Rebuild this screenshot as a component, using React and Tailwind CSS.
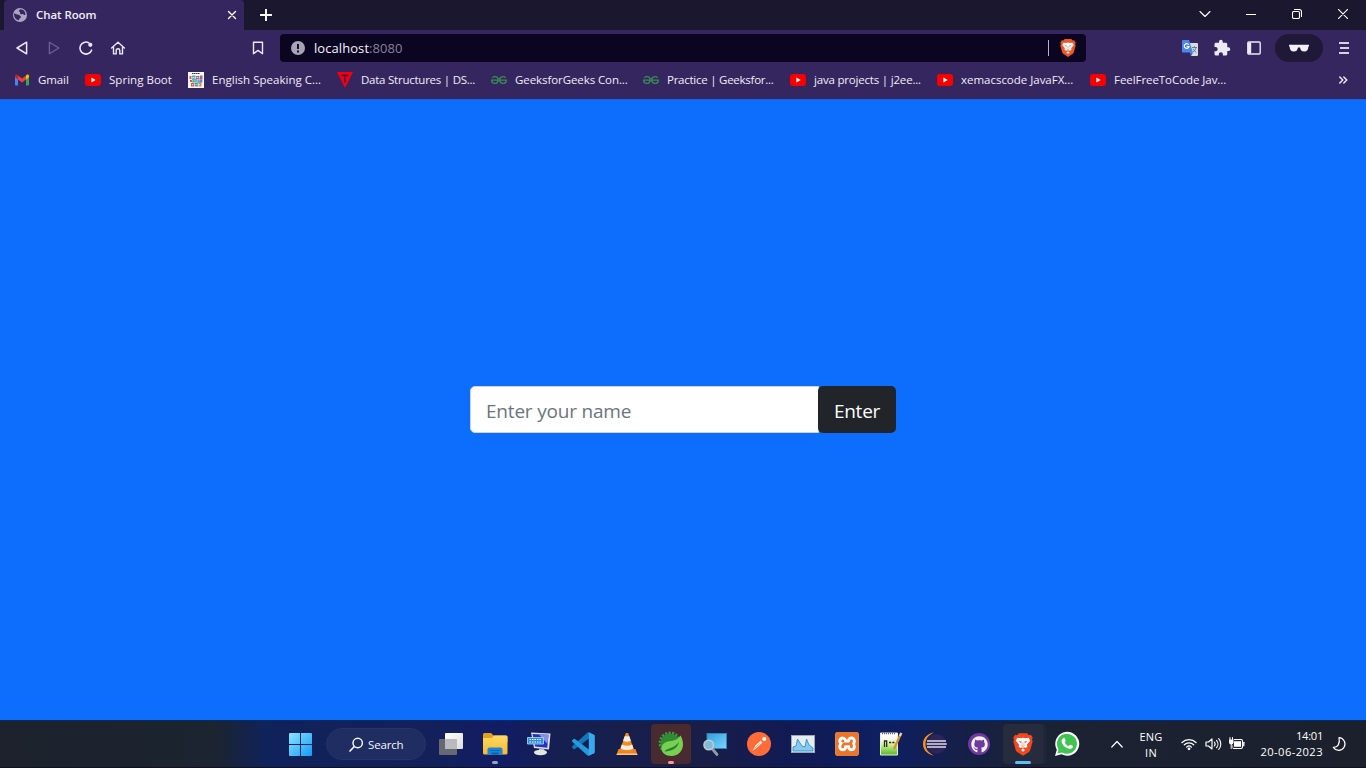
import React from "react";
import { SiGeeksforgeeks, SiXampp } from "react-icons/si";
import { FaGithub } from "react-icons/fa";
import { MdExtension } from "react-icons/md";

const line = { fill: "none", stroke: "currentColor", strokeLinecap: "round", strokeLinejoin: "round" };

function Svg({ w = 16, h = w, box = `0 0 ${w} ${h}`, children }) {
  return (
    <svg width={w} height={h} viewBox={box} className="block shrink-0">
      {children}
    </svg>
  );
}

const Globe = () => (
  <Svg w={14} box="0 0 14 14">
    <circle cx="7" cy="7" r="7" fill="#a9a5bc" />
    <path d="M1.200 5.500c1.500-.2 2.200 1 3.500 1.100 1.400.1 1.600 1 2.700 1.300.9.400.5 1.800-.3 2.200-.9.400-.6 1.500-1.300 2.200C3 12 .6 8.900 1.200 5.500z" fill="#352660" />
    <path d="M7.300 1.200c-.6.9-1.700 1-1.500 1.900.2.900 1.100.4 1.300 1.200.2.800-.4 1.400.3 1.800.9.400 1.700-.5 2.600 0 .9.600 1 1.300 2.300.9C12.800 4.200 10.700 1.200 7.300 1.200z" fill="#352660" />
  </Svg>
);

const YouTube = () => (
  <Svg>
    <rect x="0" y="2" width="16" height="12" rx="3" fill="#f80000" />
    <path d="M6.400 5.500v5L10.700 8z" fill="#fff" />
  </Svg>
);

const Gmail = () => (
  <Svg>
    <path d="M1 4.500v8q0 .9 1 .9h2V6.600z" fill="#4285f4" />
    <path d="M15 4.500v8q0 .9-1 .9h-2V6.600z" fill="#34a853" />
    <path d="M12 3.400v4l3-2.200V4c0-1.500-1.400-1.900-2.300-1.200z" fill="#fbbc04" />
    <path d="M1 5.200V4c0-1.500 1.400-1.900 2.300-1.200l.7.600v4z" fill="#c5221f" />
    <path d="M4 3.400 8 6.400l4-3v4l-4 3-4-3z" fill="#ea4335" />
  </Svg>
);

const EnglishLogo = () => (
  <Svg>
    <rect width="16" height="16" fill="#f7f7f4" />
    <path d="M4 1.500h8" stroke="#333" strokeWidth="1" strokeDasharray="1.500 .5" />
    <path d="M1.500 4h2v3h-2zM2 8h2v2H2z" fill="#e34f6b" />
    <path d="M4 3.500h3.500v3.300H4z" fill="#58a8c9" />
    <path d="M8 4h3.500v3H8z" fill="#d9536b" />
    <path d="M12 3.500h2.500v4H12z" fill="#8e6b9e" />
    <path d="M4 7.200h5v3.300H4z" fill="#3ba98a" />
    <path d="M9.300 7.500h5v3.200h-5z" fill="#4a86c9" />
    <path d="M3 11h3.500v3.500H3z" fill="#e8563a" />
    <path d="M7 11h3v3.500H7z" fill="#3b9cd4" />
    <path d="M10.500 11h3v3.500h-3z" fill="#e0883b" />
    <path d="M3.500 5.500h9M4 8.900h9M4 12.700h8" stroke="#fff" strokeWidth=".8" strokeDasharray="1 .8" />
  </Svg>
);

const TakeUForward = () => (
  <Svg>
    <path d="M0 0h16L8 16z" fill="#f3000c" />
    <path d="M4.600 3.300h6.800M8 3.300v7.200" stroke="#57134c" strokeWidth="1.700" />
  </Svg>
);

const Geeks = () => <SiGeeksforgeeks size={16} color="#388953" className="shrink-0" />;

const BOOKMARKS = [
  { icon: Gmail, text: "Gmail", box: "w-[71px]", track: "tracking-[-0.1px]" },
  { icon: YouTube, text: "Spring Boot", box: "w-[103px]", track: "tracking-[0.03px]" },
  { icon: EnglishLogo, text: "English Speaking C...", box: "w-[149px]", track: "tracking-[0.02px]" },
  { icon: TakeUForward, text: "Data Structures | DS...", box: "w-[154px]", track: "tracking-[-0.24px]" },
  { icon: Geeks, text: "GeeksforGeeks Con...", box: "w-[152px]", track: "tracking-[-0.08px]" },
  { icon: Geeks, text: "Practice | Geeksfor...", box: "w-[147px]", track: "tracking-[-0.25px]" },
  { icon: YouTube, text: "java projects | j2ee...", box: "w-[147px]", track: "tracking-[-0.19px]" },
  { icon: YouTube, text: "xemacscode JavaFX...", box: "w-[153px]", track: "tracking-[-0.02px]" },
  { icon: YouTube, text: "FeelFreeToCode Jav...", box: "w-[153px]", track: "tracking-[-0.06px]" },
];

function TabStrip() {
  return (
    <div className="flex h-[30px] shrink-0 bg-[#1a172e] pl-1 text-white">
      <div className="flex w-[240px] items-center rounded-t-[4px] bg-[#352660] pl-[9px] pr-[7px]">
        <Globe />
        <span className="ml-[9px] flex-1 whitespace-nowrap text-[11.5px] font-semibold tracking-[-0.08px] text-[#f0eef6]">Chat Room</span>
        <Svg w={10}>
          <path d="M1.500 1.500l7 7M8.500 1.500l-7 7" {...line} strokeWidth="1.400" />
        </Svg>
      </div>
      <div className="flex w-[44px] items-center justify-center">
        <Svg w={12}>
          <path d="M6 .5v11M.5 6h11" {...line} strokeWidth="1.900" />
        </Svg>
      </div>
      <div className="ml-auto flex pb-[2px]">
        <div className="flex w-[46px] items-center justify-center">
          <Svg w={12}><path d="M1 3.500l5 5 5-5" {...line} strokeWidth="1.100" /></Svg>
        </div>
        <div className="flex w-[46px] items-center justify-center">
          <Svg w={10}><path d="M0 5.500h10" {...line} strokeLinecap="butt" /></Svg>
        </div>
        <div className="flex w-[46px] items-center justify-center">
          <Svg w={10}>
            <rect x=".5" y="2.500" width="7" height="7" rx="1.300" {...line} strokeWidth="1.100" />
            <path d="M2.500.5h4.700q2.300 0 2.300 2.300v4.700" {...line} strokeWidth="1.100" />
          </Svg>
        </div>
        <div className="flex w-[46px] items-center justify-center">
          <Svg w={10}><path d="M.4.4l9.200 9.200M9.600.4L.4 9.600" {...line} strokeWidth="1.100" /></Svg>
        </div>
      </div>
    </div>
  );
}

function Toolbar() {
  return (
    <div className="flex h-[36px] shrink-0 items-center pl-[14px] text-[#ece9f5]">
      <div className="flex gap-4">
        <Svg><path d="M12.600 2.200v11.600L3 8z" {...line} strokeWidth="1.500" /></Svg>
        <span className="text-[#6d6290]"><Svg><path d="M3.400 2.200v11.600L12.900 8z" {...line} strokeWidth="1.300" /></Svg></span>
        <Svg>
          <path d="M13.600 10.200A6 6 0 1 1 10.700 2.700" {...line} strokeWidth="1.600" />
          <circle cx="12.300" cy="4.800" r="2.100" fill="currentColor" />
        </Svg>
        <Svg><path d="M1.600 8L8 2.200 14.400 8M3.500 7v6.900h2.700v-3.400a1.800 1.800 0 0 1 3.600 0v3.400h2.700V7" {...line} strokeWidth="1.400" /></Svg>
      </div>
      <div className="ml-[124px]">
        <Svg><path d="M3.500 2.200h9v11.500L8 10.400l-4.500 3.300z" {...line} strokeWidth="1.400" /></Svg>
      </div>
      <div className="ml-[14px] flex h-7 w-[806px] items-center rounded-[4px] bg-[#0c0522] pl-[11px] pr-[9px]">
        <Svg w={14}>
          <circle cx="7" cy="7" r="7" fill="#a7a5b4" />
          <path d="M7 3v5M7 9.600v1.800" stroke="#150e2c" strokeWidth="2" />
        </Svg>
        <span className="ml-[9px] pt-px text-[13px] tracking-[0.07px] text-[#f4f2fa]">
          localhost<span className="text-[#85819a]">:8080</span>
        </span>
        <span className="ml-auto mr-[10px] h-4 w-px bg-[#b5b1c6]" />
        <span className="flex h-[20px] w-[18px] items-center justify-center text-[#f1562b]">
          <Brave w={16} h={18} />
        </span>
      </div>
      <div className="ml-[96px] flex items-center">
        <Svg>
          <path d="M7 3h8q1 0 1 1v11q0 1-1 1H9z" fill="#d5dde0" />
          <path d="M1 0h6l4 12.500H1q-1 0-1-1V1q0-1 1-1z" fill="#4a86ee" />
          <path d="M8 12.500h3L9.300 16z" fill="#3367d6" />
          <path d="M6.700 4.700A2.400 2.400 0 1 0 7 6.600H4.800" fill="none" stroke="#fff" strokeWidth="1.100" />
          <path d="M10 7.500h5M12.500 6.200v1.300M14 7.500c-.5 2.500-1.800 3.800-3 4.600M11 8.800c.8 1.600 1.800 2.600 3.300 3.700" fill="none" stroke="#5f7680" strokeWidth=".9" />
        </Svg>
        <span className="ml-[15px]"><MdExtension size={18} /></span>
        <span className="ml-[16px]">
          <Svg w={14}>
            <rect x=".8" y="1" width="12.400" height="12" rx="1" {...line} strokeWidth="1.400" />
            <path d="M1 1.500h3.200v11H1z" fill="currentColor" />
          </Svg>
        </span>
        <span className="ml-[14px] flex h-7 w-12 items-center justify-center rounded-full bg-[#1f1836]">
          <Svg w={20} h={8}>
            <path d="M0 .7h20v1.500l-.7.500c0 3-1.300 4.800-4 4.800-2.900 0-3.900-1.900-4.300-4.100H9C8.600 5.600 7.600 7.500 4.700 7.500 2 7.500.7 5.700.7 2.700L0 2.200z" fill="#f1eff8" />
          </Svg>
        </span>
        <span className="ml-[16px] text-[#d6d2e4]">
          <Svg w={11} h={14}>
            <path d="M0 2h10M1 7h9M0 12h10" {...line} strokeLinecap="butt" strokeWidth="2" />
          </Svg>
        </span>
      </div>
    </div>
  );
}

function Bookmarks() {
  return (
    <div className="flex h-[33px] shrink-0 items-center pb-[5px] pl-[14px] text-[11.5px] text-[#f0eef6]">
      {BOOKMARKS.map(({ icon: Icon, text, box, track }) => (
        <div key={text} className={`flex shrink-0 items-center gap-2 whitespace-nowrap ${box} ${track}`}>
          <Icon />
          <span>{text}</span>
        </div>
      ))}
      <span className="ml-auto mr-[18px]">
        <Svg w={9} h={8}><path d="M.8 1l3 3-3 3M4.800 1l3 3-3 3" {...line} strokeWidth="1.400" /></Svg>
      </span>
    </div>
  );
}

function Brave({ w, h }) {
  return (
    <Svg w={w} h={h} box="0 0 22 25">
      <path d="M6.500 0h9l2 2.200 2-.3 2.200 3-.8 2 .7 2.200-2.500 9.200q-.5 1.700-2 2.700L11 25l-6.100-4q-1.500-1-2-2.700L.4 9.100l.7-2.200-.8-2 2.200-3 2 .3z" fill="currentColor" />
      <path d="M4.800 5.200l3.600.5L11 5l2.600.7 3.600-.5 1.700 3.200-3.600 4.300.6 2.300-2.100 1.400-1.700-1-.8.600v1.200l2 1.400-2.300 1.900-2.300-1.900 2-1.400V16l-.8-.6-1.700 1-2.100-1.400.6-2.300-3.600-4.300z" fill="#fff" />
      <path d="M5.900 8.500l3.400.9-.8 1.500zM16.100 8.500l-3.400.9.800 1.500zM9.600 13.900h2.800L11 15z" fill="currentColor" />
      <path d="M9.200 9.400l.9 2.300-.6 2.200M12.800 9.400l-.9 2.300.6 2.200" fill="none" stroke="currentColor" strokeWidth=".5" />
    </Svg>
  );
}

const Windows = () => (
  <Svg w={23} box="0 0 24 24">
    <defs>
      <linearGradient id="win" x2="1" y2="1"><stop stopColor="#8be4ff" /><stop offset="1" stopColor="#139bf5" /></linearGradient>
    </defs>
    <path d="M1 0h10.500v11.500H0V1q0-1 1-1zM12.500 0H23q1 0 1 1v10.500H12.500zM0 12.500h11.500V24H1q-1 0-1-1zM12.500 12.500H24V23q0 1-1 1H12.500z" fill="url(#win)" />
  </Svg>
);

const TaskView = () => (
  <Svg w={24}>
    <defs><linearGradient id="tv" x2="1" y2="1"><stop stopColor="#fff" /><stop offset="1" stopColor="#dcdde0" /></linearGradient></defs>
    <rect x="0" y="7" width="18" height="16" rx="1" fill="#666a70" />
    <rect x="6" y="1" width="18" height="16" rx="1" fill="url(#tv)" />
    <rect x="6" y="7" width="12" height="10" fill="#b9babd" />
  </Svg>
);

const Explorer = () => (
  <Svg w={26} h={24}>
    <defs><linearGradient id="fold" x2="0" y2="1"><stop stopColor="#ffd965" /><stop offset="1" stopColor="#f6b92d" /></linearGradient></defs>
    <path d="M1 2.500Q1 1 2.500 1H9l2.500 2.500H24q1.500 0 1.500 1.500v5H1z" fill="#e5a11b" />
    <path d="M1 6h8.500L12 3.500h12q1.500 0 1.500 1.500v16q0 1.500-1.500 1.500H2.500Q1 22.500 1 21z" fill="url(#fold)" />
    <path d="M5.500 22.500v-5q0-2 2-2h11q2 0 2 2v5z" fill="#1687d9" />
    <path d="M9.500 22.500v-2h7v2z" fill="#0c60a9" />
    <path d="M8 18.500h10" stroke="#0e69b4" />
  </Svg>
);

const VirtualPc = () => (
  <Svg w={26} h={26}>
    <path d="M5 1.500l19.500 1-1.500 16L8 17z" fill="#dfe2e5" />
    <path d="M6.500 3l16 .8-1.200 13L9 15.500z" fill="#2630c4" />
    <path d="M13 3.500l9.500.4-1 9z" fill="#8290e8" />
    <path d="M1.500 6.500h16v6.500h-16z" fill="#2b8de0" stroke="#b7dcf5" strokeWidth=".8" />
    <path d="M3.500 8.500h12M3.500 11h12" stroke="#fff" strokeWidth="1" strokeDasharray="1.500 1" />
    <path d="M13 17.500h5l1 4h-6z" fill="#b5babd" />
    <ellipse cx="14.500" cy="21.500" rx="6.500" ry="2.700" fill="#e4e6e4" />
  </Svg>
);

const VsCode = () => (
  <Svg w={24} h={24} box="0 0 24 24">
    <path d="M23.200 3.100 18 .4q-1-.5-1.800.3L1.300 14.200q-.8.800 0 1.500l1.300 1.200q.7.500 1.300 0L22 3.500z" fill="#1276b8" />
    <path d="M23.200 20.900 18 23.600q-1 .5-1.800-.3L1.300 9.800q-.8-.8 0-1.500l1.300-1.200q.7-.5 1.300 0L22 20.500z" fill="#249ade" />
    <path d="M17.800.3 23 2.800q.8.400.8 1.300v15.800q0 .9-.8 1.300l-5.200 2.500z" fill="#38a9ef" />
  </Svg>
);

const Vlc = () => (
  <Svg w={22} h={24}>
    <path d="M2.500 17h17l2 6H.5z" fill="#f0821c" />
    <path d="M9.800 1h2.400l5.800 17q-7 3.500-14 0z" fill="#f58a1c" />
    <path d="M8.700 4.200h4.600l1.600 4.600q-3.900 1.700-7.800 0z" fill="#f3efe9" />
    <path d="M5.800 12.600q5.200 2.400 10.400 0l1.300 3.800q-6.500 3.200-13 0z" fill="#f2ede8" />
    <path d="M1 21.500h20l.5 1.500H.5z" fill="#f8c68d" />
  </Svg>
);

const Spring = () => (
  <Svg w={26}>
    <circle cx="12" cy="12" r="9.500" fill="#2f8c35" />
    <circle cx="12" cy="12" r="10.200" fill="none" stroke="#3b9c3e" strokeWidth="2.400" strokeDasharray="2.200 1.360" />
    <path d="M22.500 4.500c1 1.500 2.500 5 2.500 9 0 6-4.500 11.500-11.500 11.500-6 0-10-3.500-10-7.500 0-4.500 3.500-6.500 8-7.200 4.500-.6 8.500-1.600 11-5.800z" fill="#78d052" />
    <path d="M6.500 20.500c2-3.500 9-2.500 14.500-9.500-1.500 6-6.500 9.500-14.500 9.500z" fill="#2b8030" />
  </Svg>
);

const RemoteView = () => (
  <Svg w={26}>
    <defs><linearGradient id="rdp" x2="1" y2="1"><stop stopColor="#2f9fe0" /><stop offset="1" stopColor="#7ad4fb" /></linearGradient></defs>
    <rect x="5" y="2.500" width="19.500" height="15" fill="url(#rdp)" stroke="#3682b4" />
    <path d="M10 17.500l5 6" stroke="#8f9ba8" strokeWidth="2.800" strokeLinecap="round" />
    <circle cx="6.700" cy="14" r="4.800" fill="#82b9d8" stroke="#c5ccd0" strokeWidth="1.400" />
  </Svg>
);

const Postman = () => (
  <Svg w={26}>
    <circle cx="13" cy="13" r="12" fill="#ff6c37" />
    <path d="M6.500 20l3.200-5.700 5-4.500 1.600 1.600-4.700 4.700z" fill="#fff" />
    <circle cx="18.300" cy="7.900" r="2" fill="#fff" />
    <path d="M8.500 17.500l5.800-5.600M14 9l3.200 3.200" stroke="#ff8a5c" strokeWidth=".8" />
  </Svg>
);

const PerfMon = () => (
  <Svg w={24} h={20}>
    <rect x=".5" y="1.500" width="23" height="17" fill="#e6edf0" stroke="#9ba8b3" />
    <path d="M2 17v-4l3-1 1.500-7L9 9l2 3 3 1 1.500-8L18 11l4 3v3z" fill="#83cbee" stroke="#2686c4" strokeWidth=".8" />
  </Svg>
);

const Xampp = () => (
  <span className="flex size-6 items-center justify-center rounded-[4px] bg-white">
    <SiXampp size={24} color="#e9762b" />
  </span>
);

const Notepad = () => (
  <Svg w={24} h={26}>
    <defs><linearGradient id="npp" x2="0" y2="1"><stop offset=".2" stopColor="#fff" /><stop offset=".5" stopColor="#d9f29d" /><stop offset="1" stopColor="#54ba21" /></linearGradient></defs>
    <path d="M1.500 2h17v22h-17z" fill="url(#npp)" stroke="#e7eee0" />
    <path d="M3 2.500h14" stroke="#666" strokeWidth="1.500" strokeDasharray="1 1" />
    <path d="M5.500 16v-6h2.200v6M10 11.500h2.200M13.300 11.500h2.200" fill="none" stroke="#262b25" strokeWidth="1.300" />
    <path d="M21.300 4L15 18" stroke="#d6932d" strokeWidth="2.400" />
    <path d="M22.300 2L20.800 5" stroke="#ead6b1" strokeWidth="2.400" />
  </Svg>
);

const Eclipse = () => (
  <Svg w={26}>
    <path d="M12 1.500C5 2.500 1 7.500 1 13s4 10.500 11 11.500C6.500 22 3.500 18 3.500 13S6.500 4 12 1.500z" fill="#f7941e" />
    <circle cx="14.500" cy="13" r="10" fill="#2d2458" />
    <path d="M5 10h19M4.500 13h20.300M5 16h19" stroke="#dcdaea" strokeWidth="1.700" />
  </Svg>
);

const GitHub = () => (
  <span className="flex size-[22px] items-center justify-center rounded-full bg-[#6e3a9d] text-white">
    <FaGithub size={17} color="#f6f0fb" />
  </span>
);

const WhatsApp = () => (
  <Svg w={26}>
    <path d="M1 25l1.800-6.300A12 12 0 1 1 7.500 23.300z" fill="#fff" />
    <path d="M3.500 22.500l1-4.300A10 10 0 1 1 8 21.500z" fill="#3fc351" />
    <path d="M9.200 7.200c.5-.5 1.200-.5 1.500.1l1 2.300c.2.500-1 1.400-1 1.800.8 1.600 2 2.800 3.700 3.500.5.200 1.300-1.400 1.900-1.200l2.300 1.100c.6.400.3 1.700-.3 2.300-1 .9-2.400 1-4.200.4-3-1-5.400-3.500-6.300-6.100-.5-1.700-.1-3.100 1.400-4.200z" fill="#fff" />
  </Svg>
);

const BraveApp = () => (
  <span className="text-[#f3471f]"><Brave w={20} h={23} /></span>
);

const APPS = [
  { name: "taskview", icon: TaskView },
  { name: "explorer", icon: Explorer, dot: "w-[6px] bg-[#9aa0b8]" },
  { name: "virtualpc", icon: VirtualPc },
  { name: "vscode", icon: VsCode },
  { name: "vlc", icon: Vlc },
  { name: "spring", icon: Spring, dot: "w-[6px] bg-[#ff9a97]", tile: "bg-[#482a30]" },
  { name: "remote", icon: RemoteView },
  { name: "postman", icon: Postman },
  { name: "perfmon", icon: PerfMon },
  { name: "xampp", icon: Xampp },
  { name: "notepad", icon: Notepad },
  { name: "eclipse", icon: Eclipse },
  { name: "github", icon: GitHub },
  { name: "brave", icon: BraveApp, dot: "w-4 bg-[#5fbdf5]", tile: "bg-[#262c3e] shadow-[3px_0_0_#20273a]" },
  { name: "whatsapp", icon: WhatsApp },
];

function Taskbar() {
  return (
    <div className="flex h-12 shrink-0 items-center border-t border-t-[#0b2a60] border-b border-b-[#10101f] bg-[linear-gradient(90deg,#1d222c_0,#1b2430_215px,#10225a_265px,#14205a_430px,#111c66_500px,#151f50_560px,#191e48_700px,#111a54_790px,#0e1f62_890px,#151f48_960px,#1b2233_1040px,#1c202d_1366px)] pl-[278px] text-white">
      <div className="flex w-11 justify-center pl-px"><Windows /></div>
      <div className="ml-1 flex h-8 w-[100px] items-center rounded-full border border-[#243368] bg-[#1f2d63] pl-[22px] text-[#f5f6fc]">
        <Svg w={15}>
          <circle cx="8.700" cy="6" r="4.700" {...line} strokeWidth="1.500" />
          <path d="M5.300 9.500L1 14" {...line} strokeWidth="1.700" />
        </Svg>
        <span className="ml-[4px] pt-px text-[11.5px] font-medium tracking-[-0.15px]">Search</span>
      </div>
      <div className="ml-[3px] flex">
        {APPS.map(({ name, icon: Icon, dot, tile }) => (
          <div key={name} className="flex w-11 justify-center">
            <div className={`relative flex size-10 items-center justify-center rounded-[4px] ${tile || ""}`}>
              <Icon />
              {dot && <span className={`absolute bottom-0 left-1/2 h-[3px] -translate-x-1/2 rounded-full ${dot}`} />}
            </div>
          </div>
        ))}
      </div>
      <div className="ml-[22px] flex items-center">
        <Svg w={12} h={8}><path d="M.8 7L6 1.500 11.200 7" {...line} strokeWidth="1.200" /></Svg>
        <div className="ml-[14px] w-[28px] pt-px text-center text-[11px] leading-4 tracking-[0.2px]">
          <div>ENG</div>
          <div>IN</div>
        </div>
        <span className="ml-[16px]">
          <Svg w={16}>
            <path d="M1 6.500a10 10 0 0 1 14 0M3.300 8.800a6.700 6.700 0 0 1 9.400 0M5.600 11.100a3.400 3.400 0 0 1 4.800 0" {...line} strokeWidth="1.300" />
            <circle cx="8" cy="12.800" r="1.400" fill="currentColor" />
          </Svg>
        </span>
        <span className="ml-[8px]">
          <Svg w={17} h={16}>
            <path d="M1 6h2.500L7 3v10l-3.500-3H1z" {...line} strokeWidth="1.200" />
            <path d="M9.300 6a3 3 0 0 1 0 4M11.500 4.300a5.500 5.500 0 0 1 0 7.400M13.700 2.600a8 8 0 0 1 0 10.800" {...line} strokeWidth="1.100" />
          </Svg>
        </span>
        <span className="ml-[6px]">
          <Svg w={17} h={16}>
            <rect x="4.500" y="3.500" width="10" height="9" rx="1.500" {...line} strokeWidth="1.100" />
            <rect x="6" y="5.200" width="7" height="5.600" fill="currentColor" />
            <path d="M15.800 6.300v3.400" {...line} strokeWidth="1.300" />
            <path d="M0 1h6v5.500a3 3 0 0 1-1.500 2.800V15H2V9.300A3 3 0 0 1 0 6.500z" fill="#1c202d" />
            <path d="M1 3.500h4.500v2.700a2.200 2.200 0 0 1-4.500 0z" fill="currentColor" />
            <path d="M2 1.500v2M4.500 1.500v2M3.200 8v4.500" {...line} strokeWidth="1" />
          </Svg>
        </span>
        <div className="ml-[10px] w-[68px] whitespace-nowrap text-right text-[11.2px] leading-4">
          <div className="tracking-[-0.3px]">14:01</div>
          <div className="tracking-[0.42px]">20-06-2023</div>
        </div>
        <span className="ml-[9px]">
          <Svg w={15} h={16}>
            <path d="M7 1.700a6.300 6.300 0 1 1-5.700 9.600c4.400.4 7-3.800 5.700-9.600z" {...line} strokeWidth="1.200" />
          </Svg>
        </span>
      </div>
    </div>
  );
}

export default function App() {
  return (
    <div className="flex h-[768px] w-[1366px] flex-col overflow-hidden bg-[#352660] font-['Open_Sans','Noto_Sans',sans-serif]">
      <TabStrip />
      <Toolbar />
      <Bookmarks />
      <main className="flex flex-1 items-center justify-center border-t border-[#1a62dc] bg-[#0d6efd] pb-[2px]">
        <form className="flex h-[47px] w-[426px]" onSubmit={(e) => e.preventDefault()}>
          <input
            type="text"
            placeholder="Enter your name"
            className="w-[349px] rounded-l-[5px] border border-[#ced4da] bg-white px-[15px] pt-[4px] text-[19px] tracking-[-0.2px] text-[#212529] outline-none placeholder:text-[#6c757d]"
          />
          <button type="submit" className="-ml-px w-[78px] rounded-[5px] bg-[#212529] pt-[4px] text-[19px] tracking-[-0.25px] text-white">
            Enter
          </button>
        </form>
      </main>
      <Taskbar />
    </div>
  );
}
